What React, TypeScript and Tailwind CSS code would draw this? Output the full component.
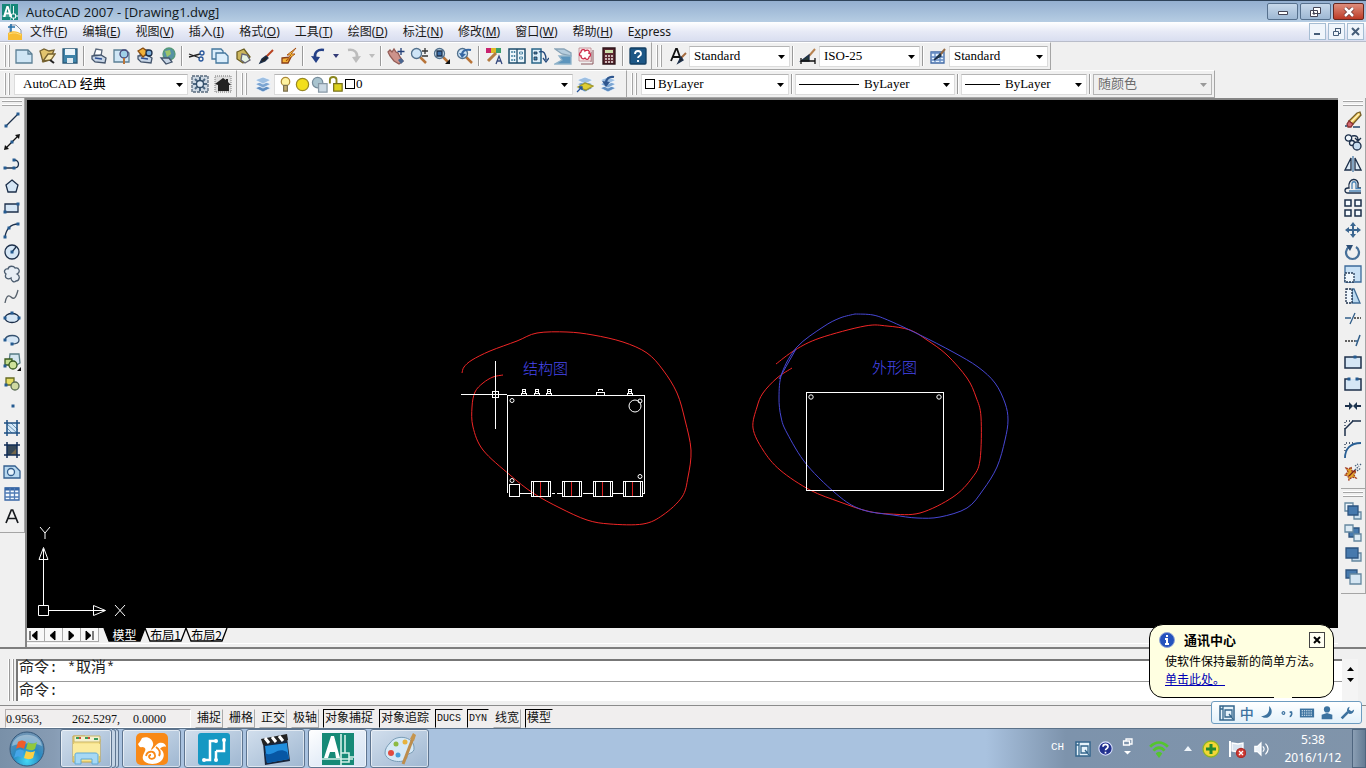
import React, { ReactNode } from "react";

type Point = [number, number];

/* ---------- shared pieces ---------- */

function Glyph({ children, size = 18 }: { children: ReactNode; size?: number }) {
  return (
    <svg width={size} height={size} viewBox="0 0 18 18" fill="none" stroke="#1c2f4a" strokeWidth="1.3" aria-hidden="true" className="shrink-0">
      {children}
    </svg>
  );
}

function Tool({ label, children }: { label: string; children: ReactNode }) {
  return (
    <button type="button" aria-label={label} className="flex h-[22px] w-[23px] shrink-0 items-center justify-center hover:bg-[#d9e5f5]">
      <Glyph>{children}</Glyph>
    </button>
  );
}

function Divider() {
  return <span className="mx-[2px] box-content h-5 w-px shrink-0 border-r border-r-white bg-[#9a9a9a]" />;
}

function Grip({ gap = "mr-1" }: { gap?: string }) {
  return (
    <span className={`ml-1 flex h-[22px] shrink-0 gap-[2px] ${gap}`}>
      <i className="w-[2px] border-r border-[#a5a5a5] bg-white" />
      <i className="w-[2px] border-r border-[#a5a5a5] bg-white" />
    </span>
  );
}

function FlatGrip() {
  return (
    <span className="mx-[2px] mt-[2px] mb-[3px] flex flex-col gap-[2px]">
      <i className="h-[2px] border-b border-[#a5a5a5] bg-white" />
      <i className="h-[2px] border-b border-[#a5a5a5] bg-white" />
    </span>
  );
}

function Bar({ children }: { children: ReactNode }) {
  return <div className="flex items-center border-t border-r border-b border-[#a5a5a5] border-t-white pr-[2px]">{children}</div>;
}

const songti = "font-['Liberation_Serif','Noto_Sans_CJK_SC',serif]";

function Combo({ label, value, width, pad = "pl-2", lead, disabled }: { label: string; value: string; width: string; pad?: string; lead?: ReactNode; disabled?: boolean }) {
  return (
    <div className={`relative h-[21px] shrink-0 ${width}`}>
      <select
        aria-label={label}
        disabled={disabled}
        className={`block size-full appearance-none border border-[#dcdcdc] border-t-[#b5b5b5] bg-white text-[13px] leading-4 text-black disabled:border-[#b5b5b5] disabled:bg-[#f0f0f0] disabled:text-[#6d6d6d] disabled:opacity-100 ${songti} ${pad}`}
      >
        <option>{value}</option>
      </select>
      {lead && <div className="pointer-events-none absolute inset-y-0 left-0 flex items-center">{lead}</div>}
      <svg className={`pointer-events-none absolute top-2 right-1 ${disabled ? "text-[#9a9a9a]" : "text-black"}`} width="9" height="6" aria-hidden="true">
        <path d="M1 1h7L4.500 5z" fill="currentColor" />
      </svg>
    </div>
  );
}

/* ---------- icon fragments ---------- */

const paper = <path d="M1 3h12l4 4v9H1z" fill="#cfe6f5" stroke="#5b7f94" />;
const lens = (
  <>
    <path d="M10 10l6 6" stroke="#b8743a" strokeWidth="2.500" />
    <circle cx="6.500" cy="6.500" r="5" fill="#cfe5f7" stroke="#52708c" />
  </>
);
const sheets = (
  <>
    <path d="M1 13l8-3 8 3-8 4z" fill="#5d8cc0" stroke="#f4f8fc" strokeWidth=".8" />
    <path d="M1 9l8-3 8 3-8 4z" fill="#7ba5d2" stroke="#f4f8fc" strokeWidth=".8" />
    <path d="M1 5l8-3 8 3-8 4z" fill="#9dbfe2" stroke="#f4f8fc" strokeWidth=".8" />
  </>
);
const printer = (
  <>
    <path d="M4 8l2-6 6 1-1 6z" fill="#fff" stroke="#59677a" />
    <path d="M2 9l9-1 5 3-1 5-10-1-3-3z" fill="#c7d5e5" stroke="#43546b" />
    <path d="M5 11l7 1" stroke="#2d4f94" />
  </>
);

function StandardTools() {
  return (
    <>
      <Tool label="新建">{paper}<path d="M13 3v4h4" stroke="#5b7f94" /></Tool>
      <Tool label="打开"><path d="M2 4l4-2 5 2 5-1-4 10-7 2z" fill="#e2c46d" stroke="#74602e" /><path d="M5 14l5-7h7l-4 6z" fill="#f7e5a4" stroke="#74602e" /><path d="M12 13l4 3" stroke="#222" strokeWidth="2" /></Tool>
      <Tool label="保存"><path d="M2 2h14v14H2z" fill="#3d83a8" stroke="#2b5a78" /><path d="M4 2h10v6H4z" fill="#e9f4fa" stroke="none" /><path d="M6 11h6v5H6z" fill="#dfeaf0" stroke="none" /></Tool>
      <Divider />
      <Tool label="打印">{printer}</Tool>
      <Tool label="打印预览"><path d="M1 3h12l3 3v9H1z" fill="#cfe6f5" stroke="#5b7f94" /><circle cx="11" cy="7" r="4" fill="#9fd0e8" stroke="#447" /><path d="M11 11v6" stroke="#b8743a" strokeWidth="2" /></Tool>
      <Tool label="发布">{printer}<path d="M2 4l5-3 5 4-5 5z" fill="#f2b23a" stroke="#8a4e13" /><circle cx="13" cy="6" r="3" fill="#7eb0dc" /></Tool>
      <Tool label="三维 DWF"><circle cx="10" cy="7" r="6" fill="#5592a5" stroke="#597" /><path d="M6 4l5-1 1 4-4 3z" fill="#9cc46a" stroke="none" /><path d="M2 11h8l3 4-6 2z" fill="#c7d5e5" stroke="#43546b" /></Tool>
      <Divider />
      <Tool label="剪切"><path d="M1 7l11 4M1 10l11-3" stroke="#222" /><circle cx="14" cy="6" r="2" stroke="#27569b" /><circle cx="13" cy="12" r="2" stroke="#27569b" /></Tool>
      <Tool label="复制"><path d="M1 2h9l2 2v8H1z" fill="#dbeefb" stroke="#44779d" /><path d="M5 6h9l3 3v7H5z" fill="#dbeefb" stroke="#44779d" /></Tool>
      <Tool label="粘贴"><path d="M3 5l7-3 6 8-7 6-6-4z" fill="#ccb65c" stroke="#6d5f22" /><path d="M8 7l5 1 3 5-5 3-4-3z" fill="#e5f2e2" stroke="#667" /></Tool>
      <Tool label="特性匹配"><path d="M16 3l-8 8" stroke="#b84320" strokeWidth="2" /><path d="M9 9l-4 3-2 4 5-2 3-3z" fill="#222" /></Tool>
      <Tool label="块编辑器"><path d="M2 11l9-1-3 6H2z" fill="#f4b338" stroke="#8a3f17" /><path d="M16 1l-9 7h4l-5 6 9-7h-4z" fill="#ffd642" stroke="#a54b12" strokeWidth=".9" /></Tool>
      <Divider />
      <Tool label="放弃"><path d="M15 3C9 2 5 5 6 11" stroke="#233f86" strokeWidth="2.500" /><path d="M2 9l5 7 4-6z" fill="#233f86" stroke="none" /></Tool>
      <span className="flex w-[13px] justify-center"><svg width="6" height="4" aria-hidden="true"><path d="M0 0h6L3 4z" fill="#333b77" /></svg></span>
      <Tool label="重做"><path d="M3 3c6-1 10 2 9 8" stroke="#bcbcbc" strokeWidth="2.500" /><path d="M16 9l-5 7-4-6z" fill="#bcbcbc" stroke="none" /></Tool>
      <span className="flex w-[13px] justify-center"><svg width="6" height="4" aria-hidden="true"><path d="M0 0h6L3 4z" fill="#bdbdbd" /></svg></span>
      <Divider />
      <Tool label="实时平移"><path d="M1 5l2-2 2 2 2-3 2 3 2 1 2 4 3 4-4 3-5-3-4-5z" fill="#cd938b" stroke="#935c56" /><path d="M11 13l3-2 3 3-3 3z" fill="#4a6690" stroke="none" /><path d="M14 1v7M10.500 4.500h7" stroke="#223f77" /></Tool>
      <Tool label="实时缩放">{lens}<path d="M15 1v6M12 4h6M12 9h6" stroke="#333" /></Tool>
      <Tool label="窗口缩放">{lens}<path d="M4 4h5v5H4z" fill="#3d6fa8" /><path d="M17 12v5h-5z" fill="#111" stroke="none" /></Tool>
      <Tool label="缩放上一个">{lens}<path d="M15 3C9 2 6 4 6 8" stroke="#3667a3" strokeWidth="2" /><path d="M3 6l3 5 4-4z" fill="#3667a3" stroke="none" /></Tool>
      <Divider />
      <Tool label="特性"><path d="M1 1h5v5H1z" fill="#c8226f" stroke="none" /><path d="M6 1h5v5H6z" fill="#e0ba24" stroke="none" /><path d="M11 1h5v5h-5z" fill="#3d9f6b" stroke="none" /><path d="M3 14l8-8" stroke="#b47c42" strokeWidth="3" /><path d="M11 17l3-8 3 8M12 14h4" stroke="#33477c" /></Tool>
      <Tool label="设计中心"><path d="M1 2h16v14H1z" fill="#eef7fc" stroke="#1e4c6b" strokeWidth="1.500" /><path d="M9 2v14" stroke="#1e4c6b" /><path d="M3.500 4.500h1v1h-1zM6 4.500h1v1H6zM3.500 8.500h1v1h-1zM6 8.500h1v1H6zM3.500 12.500h1v1h-1zM6 12.500h1v1H6zM11.500 5h3v2h-3zM11.500 10h3v2h-3z" stroke="#2f7194" strokeWidth=".8" /></Tool>
      <Tool label="工具选项板"><path d="M1 2h9v14H1z" fill="#dceefa" stroke="#2a6688" strokeWidth="1.500" /><path d="M3 5h3v2H3zM3 10h3v3H3z" fill="#4389b4" strokeWidth=".8" /><path d="M8 5c5-2 7 2 7 8M12 11l3 4 3-4" stroke="#254a7c" /></Tool>
      <Tool label="图纸集管理器"><path d="M1 2h9l7 4v3L8 7z" fill="#b7cedf" stroke="#88a3b6" /><path d="M5 9h12v8H1l7-4z" fill="#5d95bd" stroke="#8eb2c9" /></Tool>
      <Tool label="标记集管理器"><path d="M16 3v14H4M14 15V5" stroke="#80454c" strokeWidth=".9" /><path d="M2 1h12v13H2z" fill="#fbeaea" stroke="#b8848b" strokeWidth=".8" /><path d="M4 5c0-3 4-3 4-1 3-2 5 0 4 2 2 0 2 3 0 4 0 3-3 3-4 1-2 2-4 0-4-2-2 0-2-3 0-4z" fill="#fff" stroke="#cc2747" /></Tool>
      <Tool label="快速计算器"><path d="M3 1h12v16H3z" fill="#5a2730" stroke="#2c1318" /><path d="M5 3h8v3H5z" fill="#ccdfab" stroke="none" /><path d="M5 9h8M5 12h8M5 15h8" stroke="#f1e8e3" strokeDasharray="2 1" /></Tool>
      <Divider />
      <Tool label="帮助"><rect x="1" y="1" width="16" height="16" rx="1" fill="#1d5786" stroke="#123e62" /><path d="M6 7c0-4 6-4 6 0 0 2-3 2-3 4M9 13v2" stroke="#fff" strokeWidth="1.800" /></Tool>
    </>
  );
}

const dot = (x: number, y: number) => <rect x={x - 1.5} y={y - 1.5} width="3" height="3" fill="#245b91" stroke="none" />;
const fillBlue = "#d5e6f5";

const drawTools: [string, ReactNode][] = [
  ["直线", <><path d="M3 15L15 3" />{dot(3, 15)}{dot(15, 3)}</>],
  ["构造线", <><path d="M3 15L15 3" stroke="#111" /><path d="M1 17l1-5 4 4zM17 1l-1 5-4-4z" fill="#111" stroke="none" />{dot(9, 9)}</>],
  ["多段线", <><path d="M2 13h9M11 13c6 0 6-8 0-8" />{dot(2, 13)}{dot(11, 13)}{dot(11, 5)}</>],
  ["正多边形", <path d="M9 3l6 5-2 7H5L3 8z" fill={fillBlue} />],
  ["矩形", <><path d="M2 5h13v8H2z" fill={fillBlue} />{dot(2, 13)}{dot(15, 5)}</>],
  ["圆弧", <><path d="M2 16C3 8 8 3 15 3" />{dot(2, 16)}{dot(6, 7)}{dot(15, 3)}</>],
  ["圆", <><circle cx="9" cy="9" r="7" fill={fillBlue} /><path d="M9 9l4-5" />{dot(9, 9)}</>],
  ["修订云线", <path d="M5 4c1-4 6-3 7-1 4-1 6 4 2 6 4 2 2 7-1 7-2 2-5 0-5-3-3 2-7 0-5-4-3-2-1-6 2-5z" fill="#e7eef5" stroke="#4c5d70" />],
  ["样条曲线", <path d="M2 16c1-6 3-9 6-6s5 1 7-7" stroke="#56606b" />],
  ["椭圆", <><ellipse cx="9" cy="9" rx="7" ry="4.500" fill={fillBlue} />{dot(2, 9)}{dot(16, 9)}{dot(9, 4)}</>],
  ["椭圆弧", <><path d="M2 9c1-6 14-6 14 0 0 3-4 4-7 4" fill={fillBlue} stroke="#35516f" />{dot(2, 9)}{dot(9, 13)}</>],
  ["插入块", <><path d="M7 1h9l1 9-5 3-6-3z" fill="#d3e5ee" stroke="#567b84" /><path d="M2 6h7v6H2z" fill="#c3dc8c" stroke="#38591f" /><circle cx="10" cy="12" r="4" fill="#cfe29a" stroke="#38591f" />{dot(2, 13)}<path d="M18 14v4h-4z" fill="#111" stroke="none" /></>],
  ["创建块", <><path d="M3 3h8v7H3z" fill="#e5dc61" stroke="#656b23" /><circle cx="12" cy="11" r="4" fill="#cfd9a1" stroke="#596c52" />{dot(3, 10)}</>],
  ["点", dot(10, 9)],
  ["图案填充", <><path d="M3 4h12v10H3z" fill="#d4e8f7" stroke="none" /><path d="M4 5l10 9M4 9l5 5M8 4l7 7" stroke="#4c7ca4" strokeWidth=".8" /><path d="M4 1v16M14 1v16M1 4h16M1 14h16" stroke="#1d4f83" strokeWidth="1.500" /></>],
  ["渐变色", <><path d="M4 4h10v10H4z" fill="#75684b" stroke="none" /><path d="M4 4h10v3L7 14H4z" fill="#364858" stroke="none" /><path d="M4 1v16M14 1v16M1 4h16M1 14h16" stroke="#102c55" strokeWidth="1.500" /></>],
  ["面域", <><path d="M1 3h11l5 5v7H1z" fill="#b9d9f0" stroke="#335f8e" /><circle cx="8" cy="9" r="3.500" fill="#e8f4fc" stroke="#335f8e" /></>],
  ["表格", <><path d="M2 3h14v12H2z" fill="#f4faff" stroke="#3766a5" /><path d="M2 4h14" stroke="#3766a5" strokeWidth="3" /><path d="M2 8h14M2 12h14M7 3v12M11.500 3v12" stroke="#4f7bb5" /></>],
  ["多行文字", <path d="M3 16L8.300 3h1.400L15 16M5 11.500h8" stroke="#16191d" strokeWidth="1.700" />],
];

const modifyTools: [string, ReactNode][] = [
  ["删除", <><path d="M13 2l3-1 1 3-8 9-4-3z" fill="#efc85b" stroke="#755e29" /><path d="M15 3l-8 8" stroke="#fff3c0" /><path d="M5 10l4 3-2 3H4l-1-3z" fill="#d46771" stroke="#833" /><path d="M1 15h2M9 16h7" stroke="#23456e" strokeWidth="1.500" /></>],
  ["复制对象", <><circle cx="4.500" cy="5" r="3.200" fill="#eef5fb" /><circle cx="8" cy="10" r="2.500" fill="#eef5fb" /><circle cx="13" cy="13" r="4" fill="#c7dcef" /><path d="M8 3c5-1 6 1 6 4M11 5l3 3 3-3" /></>],
  ["镜像", <><path d="M7 3v12H1zM11 3v12h6z" fill="#dce9f4" /><path d="M9 1v16" stroke="#477aa8" /></>],
  ["偏移", <><path d="M17 16H4c-4 0-4-5 0-5h1C3 0 16 0 14 9v2h3" /><path d="M17 14H5M17 11.500h-5V7c0-3-4-3-4 0v5" stroke="#4b84b5" /></>],
  ["阵列", <path d="M1 1h6v6H1zM11 1h6v6h-6zM1 11h6v6H1zM11 11h6v6h-6z" fill="#f5fafe" strokeWidth="1.500" />],
  ["移动", <><path d="M9 3v12M3 9h12" stroke="#3b6690" strokeWidth="2" /><path d="M9 1l3 4H6zM9 17l3-4H6zM1 9l4-3v6zM17 9l-4-3v6z" fill="#3b6690" stroke="none" /></>],
  ["旋转", <><path d="M12 4a6.500 6.500 0 1 1-7 0" stroke="#477099" strokeWidth="2.200" /><path d="M2 2h7L6 8z" fill="#2d4e75" stroke="none" /></>],
  ["缩放", <><path d="M1 1h16v16H1z" fill="#c9e1f5" stroke="#3c6a99" /><path d="M1 8h9v9H1z" fill="#f1f8fd" stroke="#263c58" strokeDasharray="2 1" /></>],
  ["拉伸", <><path d="M8 2h2l6 14H8z" fill="#bbd9f0" stroke="#3e6a94" /><path d="M2 2h6v14H2z" fill="#eff6fc" strokeDasharray="2 1" /></>],
  ["修剪", <><path d="M1 9h6M6 15l5-11" stroke="#315e89" /><path d="M10 9h7" stroke="#333" strokeDasharray="2 1" /></>],
  ["延伸", <><path d="M1 10h10" stroke="#333" strokeDasharray="2 1" /><path d="M11 10h3M12 15l4-11" stroke="#315e89" strokeWidth="1.500" /></>],
  ["打断于点", <><path d="M1 4h16v11H1z" fill={fillBlue} strokeWidth="1.500" />{dot(11, 4)}</>],
  ["打断", <><path d="M5 4H1v11h16V4h-4" fill={fillBlue} strokeWidth="1.500" />{dot(5, 4)}{dot(13, 4)}</>],
  ["合并", <><path d="M1 9h5M12 9h5" strokeWidth="2" /><path d="M5 5l4 4-4 4zM13 5L9 9l4 4z" fill="#1c344f" stroke="none" /></>],
  ["倒角", <><path d="M1 10V2h8" strokeDasharray="1 2" /><path d="M1 17v-7l8-8h8" strokeWidth="1.500" /></>],
  ["圆角", <><path d="M1 10V2h8" strokeDasharray="1 2" /><path d="M1 17c0-9 5-15 16-15" stroke="#295f94" strokeWidth="1.800" /></>],
  ["分解", <><path d="M2 5l3 1 2-2 1 4 4 0-2 4 2 3-4-1-3 3-1-4-3-1 3-3z" fill="#e1a52c" stroke="#a33c22" strokeDasharray="2 1" /><path d="M5 13l6-6" stroke="#7a2020" /><path d="M11 7l4-4M13 8l4-3M11 3l3-2M16 1l1 1" stroke="#46617c" strokeDasharray="1.500 1" /></>],
];

const orderTools: [string, ReactNode][] = [
  ["前置", <><path d="M1 1h8v8H1z" fill="#edf4fa" stroke="#64879f" /><path d="M10 10h7v7h-7z" fill="#cfe2ef" stroke="#64879f" /><path d="M4 4h10v9H4z" fill="#4679ad" stroke="#2d5480" /></>],
  ["后置", <><path d="M5 4h10v9H5z" fill="#4679ad" stroke="#2d5480" /><path d="M1 1h8v7H1zM10 10h7v7h-7z" fill="#dceaf4" stroke="#64879f" /></>],
  ["置于对象之上", <><path d="M8 7h9v8H8z" fill="#c6dbeb" stroke="#64879f" /><path d="M2 2h12v10H2z" fill="#4679ad" stroke="#2d5480" /></>],
  ["置于对象之下", <><path d="M2 2h11v8H2z" fill="#4679ad" stroke="#2d5480" /><path d="M6 6h11v10H6z" fill="#d4e5f2" stroke="#64879f" /></>],
];

function ToolColumn({ items }: { items: [string, ReactNode][] }) {
  return (
    <div className="flex flex-col border-r border-b border-[#a5a5a5] pb-[5px]">
      <FlatGrip />
      {items.map(([name, art]) => <Tool key={name} label={name}>{art}</Tool>)}
    </div>
  );
}

/* ---------- drawing area ---------- */

function smooth(points: Point[]) {
  let d = `M${points[0][0]} ${points[0][1]}`;
  for (let i = 0; i < points.length - 1; i++) {
    const a = points[Math.max(i - 1, 0)];
    const b = points[i];
    const c = points[i + 1];
    const e = points[Math.min(i + 2, points.length - 1)];
    d += `C${b[0] + (c[0] - a[0]) / 6} ${b[1] + (c[1] - a[1]) / 6} ${c[0] - (e[0] - b[0]) / 6} ${c[1] - (e[1] - b[1]) / 6} ${c[0]} ${c[1]}`;
  }
  return d;
}

const leftLoop: Point[] = [[462,373],[464,367],[472,360],[490,351],[517,341],[537,333],[567,332],[593,335],[623,342],[647,353],[663,370],[677,393],[685,420],[691,450],[688,477],[682,497],[663,515],[643,524],[610,524],[587,520],[560,508],[533,493],[510,475],[483,450],[473,427],[472,407],[475,392],[483,383],[493,377],[503,375]];
const rightLoop: Point[] = [[776,364],[795,350],[820,338],[865,326],[887,326],[910,330],[927,340],[947,355],[967,378],[976,397],[981,417],[980,460],[972,478],[953,497],[920,513],[890,514],[867,511],[840,502],[810,490],[780,470],[763,450],[753,428],[757,407],[763,393],[777,378],[792,368]];
const blueLoop: Point[] = [[855,314],[873,315],[890,321],[920,335],[953,352],[978,367],[995,383],[1005,403],[1008,420],[1005,440],[997,467],[983,490],[967,508],[940,517],[917,518],[893,515],[863,510],[840,497],[807,465],[787,433],[781,417],[779,397],[782,373],[797,347],[823,327],[840,318],[855,314]];

function Drawing() {
  return (
    <svg className="absolute inset-0 size-full" role="img" aria-label="Drawing1">
      <g transform="translate(-27 -100)" fill="none" stroke="#fff" strokeWidth="1">
        <path d={smooth(leftLoop)} stroke="#f02626" />
        <path d={smooth(rightLoop)} stroke="#f02626" />
        <path d={smooth(blueLoop)} stroke="#4747d4" />
        <path d="M779 379L796 349" stroke="#4747d4" />
        <g className="font-['Noto_Sans_CJK_SC',sans-serif] text-[15px] font-light" fill="#4848f0" stroke="none">
          <text x="523" y="374">结构图</text>
          <text x="872" y="373">外形图</text>
        </g>
        <g shapeRendering="crispEdges">
          <path d="M495.500 361v68M461 394.500h46M492.500 391.500h6v6h-6z" />
          <path d="M507.500 493V395.500h137v98h-3M552 493.500h3M557 493.500h6M583 493.500h10M613 493.500h10M520 493.500h12" />
          <path d="M509.500 484.500h10v12h-10z" />
          {[531, 562, 593, 623].map((x) => (
            <g key={x}>
              <path d={`M${x + 0.5} 481.500h19v15h-19z M${x + 2.500} 481.500v15 M${x + 17.500} 481.500v15`} />
              <path d={`M${x + 9.500} 482v14`} stroke="#df2020" />
            </g>
          ))}
          {[524, 537, 549, 630].map((x) => <path key={x} d={`M${x - 2.500} 395v-2h5v2M${x - 1.500} 393v-4h3v4M${x - 2} 391.500h4`} />)}
          <path d="M596.500 395v-3h8v3zM598.500 391v-2h4v2" />
          <path d="M806.500 392.500h137v98h-137z" />
        </g>
        <circle cx="512" cy="400.500" r="2" /><circle cx="640" cy="401" r="2" /><circle cx="635" cy="406" r="6" />
        <circle cx="512" cy="480.500" r="2" /><circle cx="640" cy="476.500" r="2" />
        <circle cx="811" cy="397" r="2.200" /><circle cx="939" cy="397" r="2.200" />
        <path d="M38.500 605.500h10v10h-10zM43.500 605V549M48 610.500h57M39 559.500h9l-4.500-12zM93.500 605.500v10l12-5z" />
        <path d="M40 527l5 6 5-6M45 533v6M115 605l10 11M125 605l-10 11" />
      </g>
    </svg>
  );
}

function SheetTab({ name, active }: { name: string; active?: boolean }) {
  return (
    <button type="button" className="relative -mr-[2px] flex h-[14px] w-[43px] items-center justify-center">
      <svg className="absolute inset-0" width="43" height="14" aria-hidden="true">
        <path d="M1 0l5 13h31l5-13" fill={active ? "#000" : "#f4f4f4"} stroke="#000" strokeWidth="1.300" />
      </svg>
      <span className={`relative text-[12px] leading-3 ${active ? "text-white" : "text-black"}`}>{name}</span>
    </button>
  );
}

function Workspace() {
  return (
    <main className="flex min-h-0 flex-1 bg-[#f0f0f0]">
      <div className="w-[25px] shrink-0"><ToolColumn items={drawTools} /></div>
      <div className="flex min-w-0 flex-1 flex-col border-t-2 border-l-2 border-[#858585]">
        <div className="relative flex-1 overflow-hidden bg-black"><Drawing /></div>
        <div className="flex h-[15px]">
          {["M3 3v9M10 3v9L5 7.500z", "M10 3v9L5 7.500z", "M6 3v9l5-4.500z", "M5 3v9l5-4.500zM12 3v9"].map((d, i) => (
            <button key={i} type="button" aria-label={["首页", "上一页", "下一页", "末页"][i]} className="h-[14px] w-[18px] border-r border-b border-[#aaa] bg-[#f8f8f8]">
              <svg width="16" height="14" aria-hidden="true"><path d={d} stroke="#000" /></svg>
            </button>
          ))}
          <div className="ml-1 flex"><SheetTab name="模型" active /><SheetTab name="布局1" /><SheetTab name="布局2" /></div>
        </div>
        <div className="h-1 border-t border-white" />
      </div>
      <div className="w-7 shrink-0 pl-[3px]"><ToolColumn items={modifyTools} /><ToolColumn items={orderTools} /></div>
    </main>
  );
}

/* ---------- title and menus ---------- */

function CadLogo({ size }: { size: number }) {
  return (
    <svg width={size} height={size} viewBox="0 0 32 32" aria-hidden="true">
      <path fill="#168779" d="M0 0h32v32H0z" />
      <path d="M17 0v32M0 24h32" stroke="#73c2b8" strokeWidth="2" />
      <path d="M2 26L9 4h4l7 22h-5l-1-5H8l-1 5zM9 17h4l-2-8z" fill="#fff" />
      <path d="M19 20h8v8h-8zM23 4v16M27 24h5M23 28v4" stroke="#fff" fill="#168779" strokeWidth="1.800" />
    </svg>
  );
}

const menus: [string, string][] = [["文件", "F"], ["编辑", "E"], ["视图", "V"], ["插入", "I"], ["格式", "O"], ["工具", "T"], ["绘图", "D"], ["标注", "N"], ["修改", "M"], ["窗口", "W"], ["帮助", "H"]];

function Header() {
  const win = "flex h-[17px] w-[31px] items-center justify-center rounded-[2px] border border-[#56708d] bg-gradient-to-b from-[#c7d8ea] to-[#9eb8d4]";
  const mdi = "flex h-[17px] w-[17px] items-center justify-center border border-[#a6bdd3] bg-[#f0f5fb]";
  return (
    <header>
      <div className="flex h-[22px] items-center border-t border-t-[#2e4259] bg-gradient-to-b from-[#94afd0] to-[#b6cde3] pr-[2px] pl-[2px]">
        <CadLogo size={16} />
        <h1 className="ml-2 flex-1 font-['Open_Sans',sans-serif] text-[13px] leading-4 text-[#101820]">AutoCAD 2007 - [Drawing1.dwg]</h1>
        <div className="flex gap-[2px]">
          <button type="button" aria-label="最小化" className={win}><svg width="12" height="10"><path d="M1.500 4.500h9v3h-9z" fill="#fff" stroke="#445" /></svg></button>
          <button type="button" aria-label="还原" className={win}><svg width="13" height="12"><path d="M4.500 1.500h7v6h-7zM1.500 4.500h7v6h-7zM4 7h2v1H4z" fill="#fff" stroke="#445" /></svg></button>
          <button type="button" aria-label="关闭" className="flex h-[17px] w-[31px] items-center justify-center rounded-[2px] border border-[#642720] bg-gradient-to-b from-[#dd8d7c] to-[#bc3925]"><svg width="12" height="10"><path d="M2 1l8 8M10 1L2 9" stroke="#633" strokeWidth="4" /><path d="M2 1l8 8M10 1L2 9" stroke="#fff" strokeWidth="2.500" /></svg></button>
        </div>
      </div>
      <nav className="flex h-5 items-center border-b border-[#b9bdca] bg-gradient-to-b from-white via-[#e7eaf6] to-[#d9def0] pr-[2px] pl-[7px] font-['Noto_Sans','Noto_Sans_CJK_SC',sans-serif] text-[12px] leading-4 text-[#1a1a1a]">
        <svg width="16" height="16" viewBox="0 0 16 16" aria-hidden="true"><path d="M3 1h6l5 5v6H3z" fill="#f5f9fd" stroke="#8492a5" /><path d="M1 3h7M4 0v8" stroke="#246fa8" strokeWidth="1.500" /><path d="M1 9c5-3 9-2 14 1v6H1z" fill="#f7bd35" /><path d="M2 10c5-2 8-1 12 1" stroke="#ffe184" fill="none" /></svg>
        <div className="flex flex-1 gap-px">
          {menus.map(([name, key]) => <button key={key} type="button" className="px-[7px] whitespace-nowrap">{name}(<u>{key}</u>)</button>)}
          <button type="button" className="px-[7px]">E<u>x</u>press</button>
        </div>
        <div className="flex gap-[2px] text-[#465d78]">
          <button type="button" aria-label="最小化文档" className={mdi}><svg width="9" height="9"><path d="M1 7h6" stroke="currentColor" strokeWidth="2" /></svg></button>
          <button type="button" aria-label="还原文档" className={mdi}><svg width="10" height="10" fill="none"><path d="M3.500 4V1.500h5v5H7M1.500 4.500h5v4h-5zM3 1.500h6" stroke="currentColor" /></svg></button>
          <button type="button" aria-label="关闭文档" className={mdi}><svg width="9" height="9"><path d="M1 1l7 7M8 1L1 8" stroke="currentColor" strokeWidth="2" /></svg></button>
        </div>
      </nav>
    </header>
  );
}

function Toolbars() {
  return (
    <div className="bg-[#f0f0f0]">
      <div className="flex h-[28px]">
        <Bar><Grip gap="mr-[2px]" /><StandardTools /></Bar>
        <Bar>
          <Grip />
          <Tool label="文字样式"><path d="M2 14L7 2h1l4 11M4 10h7" stroke="#111" strokeWidth="1.800" /><path d="M17 6l-5 5" stroke="#a56b3f" strokeWidth="2" /><path d="M12 10l-3 6 5-3z" fill="#222" /></Tool>
          <Combo label="文字样式名" value="Standard" width="w-[101px]" pad="pl-1" /><Divider />
          <Tool label="标注样式"><path d="M16 2l-6 7" stroke="#b78250" strokeWidth="2" /><path d="M10 8l-8 6h8z" fill="#283a32" /><path d="M2 11v6M16 11v6M2 14h14" stroke="#111" /></Tool>
          <Combo label="标注样式名" value="ISO-25" width="w-[101px]" pad="pl-1" /><Divider />
          <Tool label="表格样式"><path d="M2 5h13v11H2z" fill="#e6f3ff" stroke="#4169a5" /><path d="M2 6h13M2 10h13M2 13h13M6 5v11M11 5v11" stroke="#648bc3" /><path d="M16 2l-5 6" stroke="#956b45" strokeWidth="2" /><path d="M11 7l-6 6 7-4z" fill="#28583d" /></Tool>
          <Combo label="表格样式名" value="Standard" width="w-[99px]" pad="pl-1" />
        </Bar>
      </div>
      <div className="flex h-[28px]">
        <Bar>
          <Grip />
          <Combo label="工作空间" value="AutoCAD 经典" width="w-[174px]" />
          <Tool label="工作空间设置"><path d="M1 1h16v16H1z" fill="#cfd9e3" stroke="#596b7e" strokeDasharray="3 1" /><path d="M9 2v14M2 9h14M4 4l10 10M14 4L4 14" stroke="#4c6780" strokeWidth="2" /><circle cx="9" cy="9" r="3.500" fill="#e3edf6" stroke="#304b66" /></Tool>
          <Tool label="我的工作空间"><path d="M1 1h16v16H1z" fill="#dedede" stroke="#999" strokeDasharray="1 1" /><path d="M1 9l8-6 3 2V4h2v3l3 3h-2v6H4v-6z" fill="#222" stroke="none" /></Tool>
        </Bar>
        <Bar>
          <Grip />
          <Tool label="图层特性管理器">{sheets}</Tool>
          <Combo
            label="图层"
            value="0"
            width="w-[299px]"
            pad="pl-[81px]"
            lead={
              <span className="flex items-center pl-[3px]">
                <Glyph size={17}><circle cx="9" cy="6" r="4.500" fill="#fff3a0" stroke="#ad8a35" /><path d="M7 10h4v6H7z" fill="#c4ae6e" stroke="#7e7350" /></Glyph>
                <Glyph size={17}><circle cx="9" cy="9" r="6.500" fill="#f3df1c" stroke="#998922" /></Glyph>
                <Glyph size={17}><circle cx="7" cy="7" r="5.500" fill="#a9c4cf" stroke="#778d9c" /><path d="M8 8h9v9H8z" fill="#cbd9e3" stroke="#8798a5" /></Glyph>
                <Glyph size={17}><path d="M2 8V4c0-4 7-4 7 0v5" stroke="#8a861d" strokeWidth="2" /><path d="M6 8h9v8H6z" fill="#dcd21e" stroke="#77701c" /></Glyph>
                <i className="size-[10px] border border-black bg-white" />
              </span>
            }
          />
          <Tool label="将对象的图层置为当前">{sheets}<path d="M2 12l7-4 8 3-7 4z" fill="#dfce34" stroke="#a39927" /><path d="M1 17l5-5M3 12h3v3" stroke="#24549c" /></Tool>
          <Tool label="上一个图层">{sheets}<path d="M15 2c-5-1-8 2-8 6" stroke="#2e568e" strokeWidth="2.200" /><path d="M3 6l4 6 4-5z" fill="#2e568e" stroke="none" /></Tool>
          <span className="w-[5px]" />
        </Bar>
        <Bar>
          <Grip />
          <Combo label="颜色控制" value="ByLayer" width="w-[148px]" pad="pl-4" lead={<i className="ml-1 size-[10px] border border-black bg-white" />} /><Divider />
          <Combo label="线型控制" value="ByLayer" width="w-[160px]" pad="pl-[68px]" lead={<i className="ml-1 h-px w-[60px] bg-black" />} /><Divider />
          <Combo label="线宽控制" value="ByLayer" width="w-[126px]" pad="pl-[43px]" lead={<i className="ml-1 h-px w-[35px] bg-black" />} /><Divider />
          <Combo label="打印样式控制" value="随颜色" width="w-[119px]" pad="pl-1" disabled />
        </Bar>
      </div>
    </div>
  );
}

/* ---------- command line and status ---------- */

function CommandArea() {
  const cmd = "font-['Liberation_Mono','Noto_Sans_CJK_SC',monospace] text-[15px] leading-4 text-[#222]";
  return (
    <section className="relative flex border-t-2 border-[#7e7e7e] bg-[#f0f0f0] pt-[10px] pb-1">
      <span className="flex gap-[2px] pr-[2px] pl-2"><i className="w-[2px] border-r border-[#999] bg-white" /><i className="w-[2px] border-r border-[#999] bg-white" /></span>
      <div className="min-w-0 flex-1 border-t-2 border-l-2 border-[#777] bg-white">
        <p className={`h-5 pl-px ${cmd}`}>命令:&nbsp;*取消*</p>
        <div className="flex h-5 items-center border-t border-[#999] pl-px">
          <label htmlFor="command" className={cmd}>命令:</label>
          <input id="command" className="h-4 min-w-0 flex-1 pl-2 text-[15px] outline-none" />
        </div>
      </div>
      <div className="mr-2 flex w-4 flex-col items-center gap-[7px] bg-[#f4f4f4] pt-2">
        <svg width="7" height="4"><path d="M0 4h7L3.500 0z" /></svg>
        <svg width="7" height="4"><path d="M0 0h7L3.500 4z" /></svg>
      </div>
      <Balloon />
      <ImeBar />
    </section>
  );
}

function Balloon() {
  return (
    <aside className="absolute right-[32px] bottom-[7px] h-[74px] w-[185px] rounded-[14px] border border-black bg-[#ffffe1] pt-[7px] pl-[15px] font-['Noto_Sans_CJK_SC',sans-serif] text-[12px] text-black">
      <div className="-ml-[6px] flex items-center">
        <svg width="16" height="16" aria-hidden="true"><circle cx="8" cy="8" r="7.500" fill="#2553bd" stroke="#91a5d6" /><path d="M8 3v2M6 7h2v5M6 12h4" stroke="#fff" strokeWidth="2" fill="none" /></svg>
        <b className="ml-[9px] flex-1 text-[13px] leading-4">通讯中心</b>
        <button type="button" aria-label="关闭通知" className="mr-2 flex size-4 items-center justify-center border border-[#444] bg-[#fffff3]"><svg width="8" height="8"><path d="M1 1l6 6M7 1L1 7" stroke="#000" strokeWidth="2" /></svg></button>
      </div>
      <p className="mt-1 leading-[18px] whitespace-nowrap">使软件保持最新的简单方法。</p>
      <a href="#update" className="block leading-[17px] text-[#0000b4] underline">单击此处。</a>
      <i className="absolute -bottom-px left-[124px] h-px w-[18px] bg-[#ffffe1]" />
    </aside>
  );
}

const qLogo = <><path d="M2 2h14v14H2z" fill="#e6f3fb" stroke="#34668c" strokeWidth="1.500" /><path d="M5 2v14M2 5h3M7 6h7v7H7zM11 10l4 5" stroke="#34668c" /></>;

function ImeBar() {
  return (
    <div className="absolute right-1 -bottom-[19px] z-10 flex h-[23px] w-[151px] items-center justify-around rounded-[3px] border border-[#6d9cc0] bg-gradient-to-b from-white to-[#e3f1fa] px-1 text-[#3c729f]">
      <Glyph>{qLogo}</Glyph>
      <span className="font-['Noto_Sans_CJK_SC',sans-serif] text-[14px] leading-4 font-medium">中</span>
      <Glyph><path d="M11 2c1 6-2 10-8 10 7 6 15-4 8-10z" fill="#3c729f" stroke="none" /></Glyph>
      <Glyph size={16}><circle cx="5" cy="9" r="1.500" stroke="#3c729f" /><path d="M12 8h2c1 3-1 5-2 5" stroke="#3c729f" strokeWidth="1.800" /></Glyph>
      <Glyph size={16}><path d="M1 4h16v10H1z" fill="#3c729f" stroke="none" /><path d="M3 6.500h12M3 9h12M3 11.500h12" stroke="#e6f3fb" strokeDasharray="1.500 1" /></Glyph>
      <Glyph size={16}><circle cx="9" cy="5" r="3.500" fill="#3c729f" stroke="none" /><path d="M3 16v-5l6-2 6 2v5z" fill="#3c729f" stroke="none" /></Glyph>
      <Glyph size={16}><path d="M3 15l7-7" stroke="#3c729f" strokeWidth="3" /><path d="M12 2c-4 1-4 7 0 8 3 0 5-2 5-5l-3 2-3-2z" fill="#3c729f" stroke="none" /></Glyph>
    </div>
  );
}

const modes: [string, string, boolean][] = [
  ["捕捉", "w-7", false], ["栅格", "w-7", false], ["正交", "w-7", false], ["极轴", "w-7", false],
  ["对象捕捉", "w-[52px]", true], ["对象追踪", "w-[52px]", true], ["DUCS", "w-[28px]", true], ["DYN", "w-[22px]", true], ["线宽", "w-7", false], ["模型", "w-7", true],
];

function StatusBar() {
  return (
    <footer className="flex h-[23px] items-end border-t border-[#8b8b8b] bg-[#f0eeee] pl-[5px] font-['Liberation_Mono','Noto_Sans_CJK_SC',monospace] text-[12px] leading-4 text-[#111]">
      <div className={`mr-1 flex h-[19px] w-[186px] items-center border border-[#b5b0b0] border-r-white border-b-white ${songti}`}>
        <span className="w-[66px]">0.9563,</span><span className="w-[61px]">262.5297,</span><span>0.0000</span>
      </div>
      <div className="flex gap-1">
        {modes.map(([name, width, on]) => (
          <button key={name} type="button" aria-pressed={on} className={`flex h-[19px] items-center justify-center border whitespace-nowrap ${width} ${name.startsWith("D") ? "text-[10px]" : ""} ${on ? "border-black border-r-[#f0eeee] border-b-[#f0eeee]" : "border-[#f0eeee] border-r-[#aaa] border-b-[#aaa]"}`}>
            {name}
          </button>
        ))}
      </div>
    </footer>
  );
}

/* ---------- taskbar ---------- */

function TaskButton({ label, active, width = "w-[59px]", children }: { label: string; active?: boolean; width?: string; children: ReactNode }) {
  return (
    <button type="button" aria-label={label} className={`flex h-[39px] items-center justify-center rounded-[3px] border border-[#5e7590] shadow-[inset_0_0_0_1px_#ffffff90] ${width} ${active ? "bg-gradient-to-br from-white via-[#e6eef8] to-[#d4e3f2]" : "bg-gradient-to-br from-[#d2dfed] to-[#9fb7d1]"}`}>
      <svg width="32" height="32" viewBox="0 0 32 32" fill="none" aria-hidden="true">{children}</svg>
    </button>
  );
}

function Taskbar() {
  return (
    <div className="flex h-10 items-center border-t border-[#5c7289] bg-[linear-gradient(90deg,#7990a8_0,#879cb4_54px,#a9c2df_120px,#a9c2df_calc(100%-380px),#7d93ac_calc(100%-300px),#8094aa_100%)]">
      <button type="button" aria-label="开始" className="flex w-[60px] justify-center pr-[6px]">
        <svg width="38" height="38" viewBox="0 0 38 38" aria-hidden="true">
          <defs><radialGradient id="orb" cy="85%" r="80%"><stop stopColor="#45d8f5" /><stop offset=".5" stopColor="#2789c2" /><stop offset="1" stopColor="#6b93b5" /></radialGradient></defs>
          <circle cx="19" cy="19" r="17" fill="url(#orb)" stroke="#36587a" />
          <path d="M4 16C6 1 32 1 34 16 25 12 13 13 4 16z" fill="#fff" opacity=".35" />
          <path d="M10 12c3-2 5-2 8 0l-2 7c-3-2-5-2-8 0z" fill="#ef5d29" /><path d="M20 12c3 2 5 2 9 0l-2 7c-3 2-6 1-9 0z" fill="#91c83e" />
          <path d="M8 21c3-2 5-2 8 0l-2 7c-3-2-5-2-8 0z" fill="#45a5e8" /><path d="M18 21c3 1 5 2 9 0l-2 7c-4 2-6 1-9 0z" fill="#fbd045" />
        </svg>
      </button>
      <div className="flex gap-[3px]">
        <div className="flex">
          <TaskButton label="资源管理器" width="w-[52px]"><path d="M3 3h12l3 3h12v23H3z" fill="#f7e38d" stroke="#c7a744" /><path d="M4 3h26v6H4z" fill="#f4f0d0" stroke="#c9b566" /><path d="M6 5h5M15 5h4M24 6h4" stroke="#3c9a5a" strokeWidth="2" /><path d="M9 5h2M18 5h2" stroke="#ce4a3b" strokeWidth="2" /><path d="M3 11h27v12H3z" fill="#fbeb9e" /><path d="M5 31V22c0-2 1-2 3-2h17c2 0 3 1 3 2v9h-6v-5H11v5z" fill="#a6d8f5" stroke="#5fa9d6" /></TaskButton>
          <i className="w-[4px] rounded-r-[3px] border-y border-r border-[#5e7590] bg-[#c3d3e4]" />
          <i className="w-[3px] rounded-r-[3px] border-y border-r border-[#5e7590] bg-[#c3d3e4]" />
        </div>
        <TaskButton label="UC浏览器"><rect width="32" height="32" rx="5" fill="#f88917" /><path d="M6 5c6-2 10 1 11 5 1 3-2 5-2 7 3-1 4-5 8-7 4-1 7 1 7 4-2-1-5 0-6 2 4 2 5 7 2 11-4 5-14 5-18 1-3-4 0-7 1-10 1-2 0-4-3-4-2 1-3-1-4-3 2-2 3-4 4-6z" fill="#fff" /><path d="M10 23c1-5 8-6 9-1 1 4-5 5-6 2 0-1 1-2 2-2M20 14c3 2 5 5 3 9" stroke="#f88917" strokeWidth="1.800" /></TaskButton>
        <TaskButton label="电路设计"><rect width="32" height="32" rx="3" fill="#1698c3" /><path d="M6 27h6V8h6M18 18v9M18 18h8V8" stroke="#fff" strokeWidth="2.500" /><circle cx="6" cy="27" r="2" fill="#fff" /><circle cx="18" cy="8" r="2" fill="#fff" /><circle cx="26" cy="7" r="2" fill="#fff" /><circle cx="18" cy="27" r="2" fill="#fff" /></TaskButton>
        <TaskButton label="视频编辑"><path d="M3 10l24-6 3 24-25 4z" fill="#17253c" /><path d="M5 13l22-3 2 16-22 4z" fill="#218ede" /><path d="M5 20c8 5 12-7 22-1l2 7-22 4z" fill="#0757a4" /><path d="M1 6L27 1l1 6-25 5z" fill="#222" /><path d="M5 5l4 5M12 4l4 5M19 3l4 5" stroke="#fff" strokeWidth="3" /></TaskButton>
        <TaskButton label="AutoCAD" active>
          <path fill="#168a77" d="M0 0h32v32H0z" /><path d="M2 25L9 3h3l6 22h-4l-1-6H8l-2 6z" fill="#fff" /><path d="M19 1v31M0 26h31M19 20h8v9h-8zM23 2v18M27 24h5" stroke="#d4f0e9" strokeWidth="1.600" />
        </TaskButton>
        <TaskButton label="画图"><path d="M6 10C12 1 29 3 30 14c1 8-8 5-7 10 0 7-21 6-22-4 0-4 2-7 5-10z" fill="#d5e9f7" stroke="#789bb5" /><circle cx="7" cy="20" r="3" fill="#e14b40" /><circle cx="12" cy="11" r="2.500" fill="#8dbb44" /><circle cx="21" cy="9" r="2.500" fill="#e7b33e" /><circle cx="14" cy="22" r="2.500" fill="#469fd9" /><path d="M29 5L19 31" stroke="#bd8d4c" strokeWidth="3" /><path d="M26 6l3-6 3 2-2 6z" fill="#c5954e" /></TaskButton>
      </div>
      <div className="ml-auto flex h-full items-center">
        <span className="w-[22px] pb-1 font-['Liberation_Mono',monospace] text-[11px] leading-4 text-white">CH</span>
        <span className="flex w-5 justify-center"><Glyph>{qLogo}</Glyph></span>
        <span className="flex w-6 justify-center"><Glyph size={15}><circle cx="9" cy="9" r="8" fill="#22318f" stroke="#dbe3ff" /><path d="M6 7c0-4 6-4 6 0 0 2-3 2-3 4M9 13v2" stroke="#fff" strokeWidth="2" /></Glyph></span>
        <span className="flex w-[22px] justify-center pb-1"><Glyph><path d="M7 3V1h6v5h-2M4.500 3h6v4h-6z" stroke="#fff" /><path d="M5 13h7l-3.500 3.500z" fill="#fff" stroke="none" /></Glyph></span>
        <span className="flex w-10 justify-center"><Glyph size={20}><path d="M1 7c5-5 11-5 16 0M4 10.500c3-3.500 7-3.500 10 0" stroke="#54c52e" strokeWidth="2.500" /><path d="M6 13c2-2 4-2 6 0l-3 4z" fill="#54c52e" stroke="none" /></Glyph></span>
        <span className="flex w-[18px] justify-center"><svg width="8" height="5" aria-hidden="true"><path d="M0 5h8L4 0z" fill="#eef4fa" /></svg></span>
        <span className="flex w-[28px] justify-center"><Glyph><circle cx="9" cy="9" r="8" fill="#f3d734" stroke="#8bb32a" /><path d="M9 4v10M4 9h10" stroke="#23892f" strokeWidth="3" /></Glyph></span>
        <span className="flex w-[24px] justify-center"><Glyph><path d="M2 1v16" stroke="#fff" strokeWidth="2" /><path d="M4 3l6 1 5-1v8l-5 1-6-1z" fill="#d9e3ee" stroke="#fff" /><circle cx="13" cy="13" r="4.500" fill="#d23b33" stroke="#ae2d2a" /><path d="M11 11l4 4M15 11l-4 4" stroke="#fff" /></Glyph></span>
        <span className="flex w-[24px] justify-center"><Glyph size={16}><path d="M2 6h3l4-4v14l-4-4H2z" fill="#eef4fa" stroke="#fff" /><path d="M11 6c2 2 2 4 0 6M14 3c4 4 4 8 0 12" stroke="#fff" /></Glyph></span>
        <time className="mr-[7px] ml-2 w-[64px] text-center font-['Noto_Sans',sans-serif] text-[12px] leading-[18px] text-white">5:38<br />2016/1/12</time>
        <button type="button" aria-label="显示桌面" className="h-full w-[14px] border border-[#4f667f] bg-gradient-to-r from-[#8b9fb4] to-[#647b93]" />
      </div>
    </div>
  );
}

export default function App() {
  return (
    <div className="flex min-h-screen flex-col bg-[#f0f0f0] font-['Noto_Sans_CJK_SC',sans-serif]">
      <Header />
      <Toolbars />
      <Workspace />
      <CommandArea />
      <StatusBar />
      <Taskbar />
    </div>
  );
}
